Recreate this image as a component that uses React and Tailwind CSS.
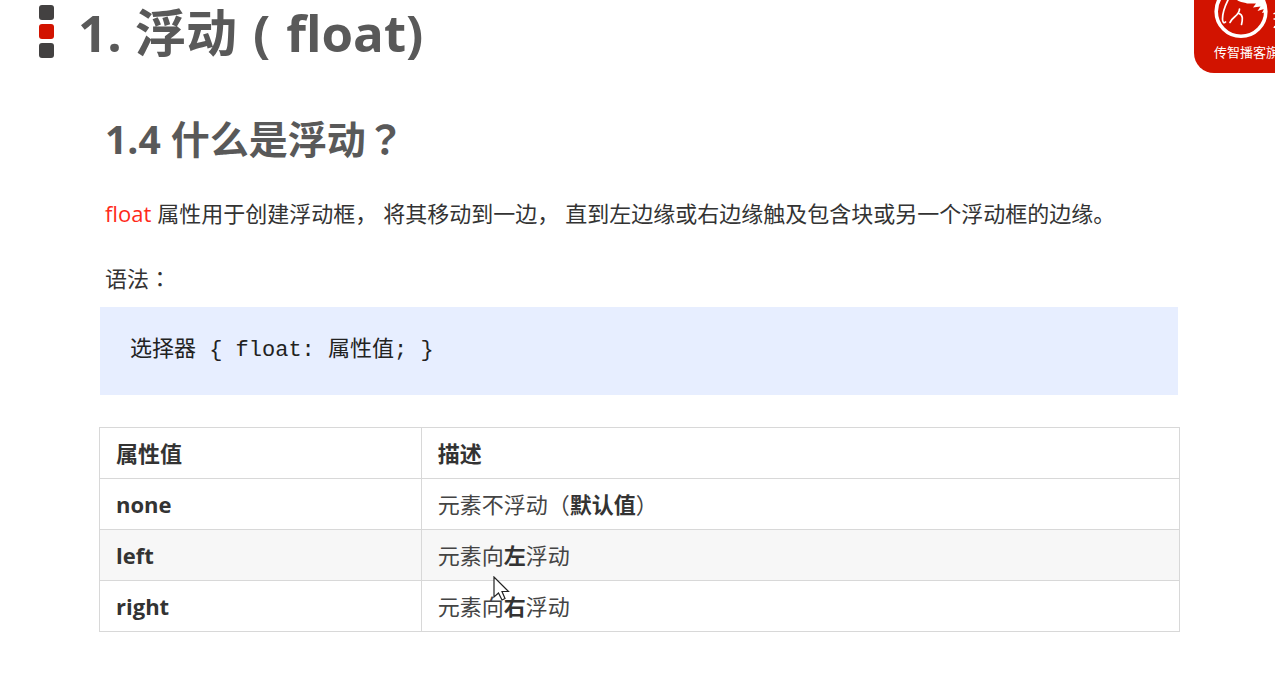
const rows = [
  { value: "none", before: "元素不浮动（", strong: "默认值", after: "）" },
  { value: "left", before: "元素向", strong: "左", after: "浮动" },
  { value: "right", before: "元素向", strong: "右", after: "浮动" },
];

function Logo() {
  return (
    <div className="w-[81px] h-[73px] shrink-0 overflow-hidden rounded-bl-[20px] bg-[#d21300] text-white">
      <svg className="block h-[42px] w-[81px]" viewBox="0 0 81 42" fill="none" aria-hidden="true">
        <circle cx="47" cy="11.500" r="24.800" stroke="#fff" strokeWidth="3.600" />
        <path d="M43 0 H70 L73 12 L68 13 L70 9 L63.500 11 L66.500 6.500 L59 7.500 L62 3.500 L53 3.500 C50 2 47 3 43 0Z" fill="#fff" />
        <path d="M34 0 C31 6 28.500 13 28.500 19 C28.500 22.500 30 23.500 31.500 22" stroke="#fff" strokeWidth="1.700" strokeLinecap="round" />
        <path d="M45.500 9 C45.500 16 37.500 17 36 22.500 M45 13.500 C49.500 15 48.500 20 47.500 24.500" stroke="#fff" strokeWidth="1.700" strokeLinecap="round" />
        <path d="M79.500 14 L81 13 M79.500 19 H81 M80 28 L81 26" stroke="#fff" strokeWidth="1.500" />
      </svg>
      <p className="ml-5 whitespace-nowrap text-[13px] leading-5">传智播客旗下</p>
    </div>
  );
}

function Cursor() {
  return (
    <svg className="absolute left-[394px] top-[149px] h-[25px] w-[17px]" viewBox="0 0 17 25" aria-hidden="true">
      <path d="M1 1 V21 L5.500 17 L9 24 L12 22.500 L9 15.500 H15.500 Z" fill="#fff" stroke="#222" strokeWidth="1.200" />
    </svg>
  );
}

export default function App() {
  return (
    <main className="min-h-screen overflow-x-hidden bg-white pb-12 font-['Open_Sans','Noto_Sans_CJK_SC',sans-serif] text-[#333]">
      <header className="flex items-start justify-between">
        <div className="flex items-start gap-6 pl-[39px]">
          <div className="flex flex-col gap-1 pt-[5px]">
            <span className="size-[15px] rounded-[3px] bg-[#434141]" />
            <span className="size-[15px] rounded-[3px] bg-[#d21300]" />
            <span className="size-[15px] rounded-[3px] bg-[#434141]" />
          </div>
          <h1 className="text-[51px] font-bold leading-[64px] text-[#595959]">
            1. 浮动<span className="px-4">(</span>float)
          </h1>
        </div>
        <Logo />
      </header>

      <div className="ml-[99px] mr-[95px]">
        <h2 className="mt-[34px] pl-[6px] text-[39px] font-bold leading-[60px] text-[#595959]">
          1.4 什么是浮动<span className="font-['Noto_Sans_CJK_JP',sans-serif]">？</span>
        </h2>
        <p className="mt-6 flex flex-wrap gap-x-[6px] pl-[6px] text-[22px] leading-10">
          <span className="text-[#ff2a1a]">float</span>
          <span>属性用于创建浮动框，</span>
          <span>将其移动到一边，</span>
          <span>直到左边缘或右边缘触及包含块或另一个浮动框的边缘。</span>
        </p>
        <p className="mt-6 pl-[6px] text-[22px] leading-10">
          语法<span className="font-['Noto_Sans_CJK_JP',sans-serif]">：</span>
        </p>
        <pre className="ml-px mr-[2px] mt-[9px] bg-[#e7eeff] px-[30px] py-6 font-['Liberation_Mono','Noto_Sans_CJK_SC',monospace] text-[22px] leading-10 text-[#222]">
          {"选择器 { float: 属性值; }"}
        </pre>

        <div className="relative mt-8">
          <table className="w-full table-fixed border-collapse text-left text-[22px] leading-[50px]">
            <thead>
              <tr>
                <th className="w-[29.8%] border border-[#d8d8d8] px-4 font-bold">属性值</th>
                <th className="border border-[#d8d8d8] px-4 font-bold">描述</th>
              </tr>
            </thead>
            <tbody>
              {rows.map((row) => (
                <tr key={row.value} className="even:bg-[#f7f7f7]">
                  <th scope="row" className="border border-[#d8d8d8] px-4 font-bold">{row.value}</th>
                  <td className="border border-[#d8d8d8] px-4 text-[#444]">
                    {row.before}
                    <strong className="font-bold text-[#333]">{row.strong}</strong>
                    {row.after}
                  </td>
                </tr>
              ))}
            </tbody>
          </table>
          <Cursor />
        </div>
      </div>
    </main>
  );
}
